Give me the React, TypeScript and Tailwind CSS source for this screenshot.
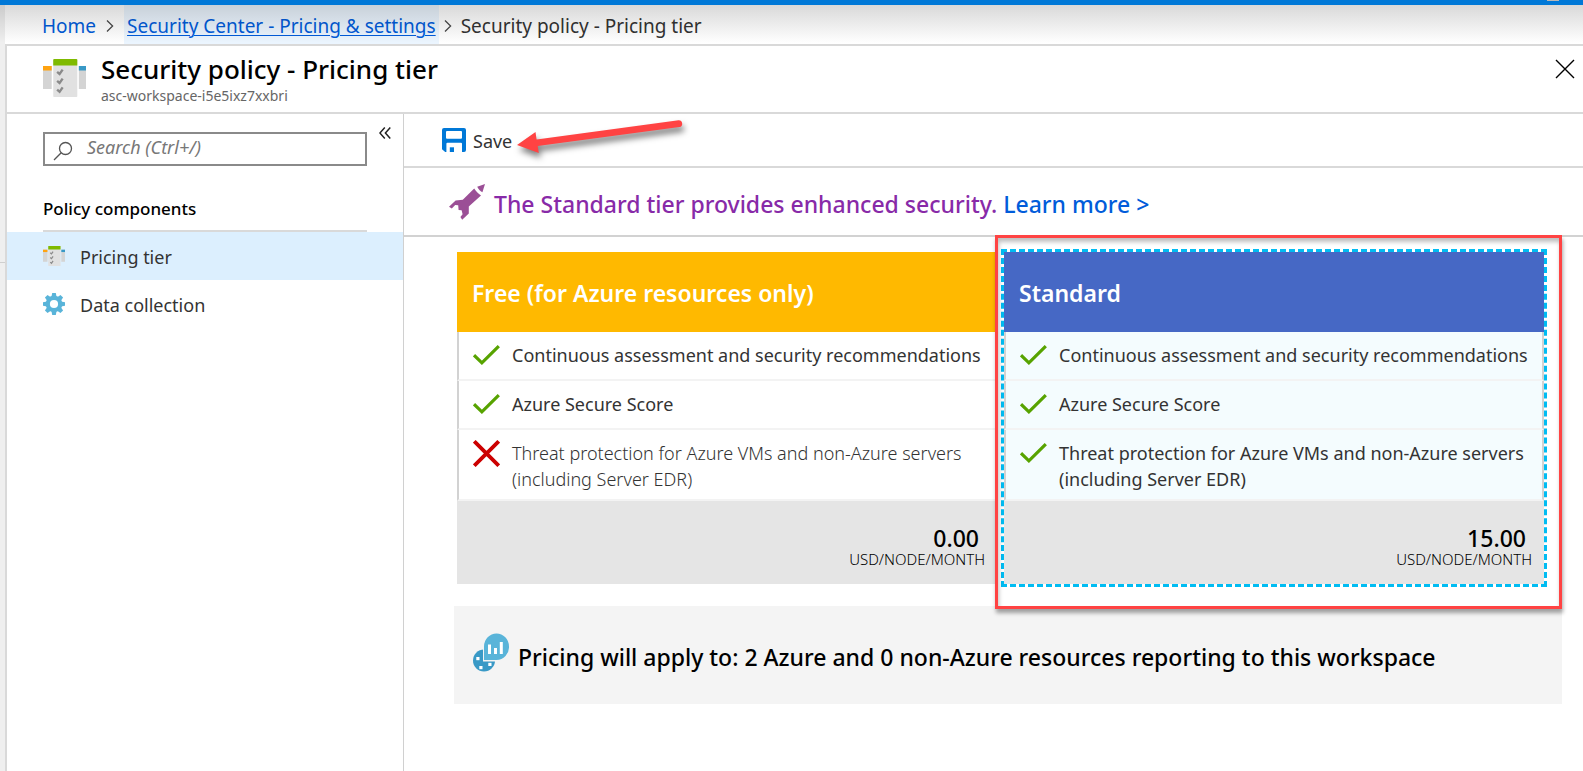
import React from "react";

const features = [
  "Continuous assessment and security recommendations",
  "Azure Secure Score",
  "Threat protection for Azure VMs and non-Azure servers (including Server EDR)",
];

function Chevron() {
  return (
    <svg viewBox="0 0 8 14" className="h-3.5 w-2 shrink-0" fill="none" stroke="#4a4a4a" strokeWidth="1.3" aria-hidden="true">
      <path d="M1 1.5 6.6 7 1 12.5" />
    </svg>
  );
}

function PolicyIcon({ className }: { className: string }) {
  return (
    <svg viewBox="0 0 42 38" preserveAspectRatio="none" className={className} aria-hidden="true">
      <rect x="0" y="7" width="8.5" height="23" fill="#d4d4d4" />
      <rect x="0" y="7" width="8.5" height="4.5" fill="#ffa311" />
      <rect x="35" y="7" width="7" height="23" fill="#d4d4d4" />
      <rect x="35" y="7" width="7" height="4.5" fill="#3999c6" />
      <rect x="10" y="0" width="23.5" height="38" rx="0.8" fill="#e1e1e1" />
      <path d="M11 0h21.5a1 1 0 0 1 1 1v5.5H10V1a1 1 0 0 1 1-1z" fill="#7fba00" />
      <g fill="none" stroke="#8a8a8a" strokeWidth="2.3">
        <path d="m13.8 12.8 2.4 2.2 3-4.4" />
        <path d="m13.8 21.8 2.4 2.2 3-4.4" />
        <path d="m13.8 30.6 2.4 2.2 3-4.4" />
      </g>
    </svg>
  );
}

function GearIcon() {
  return (
    <svg viewBox="0 0 22 22" className="size-[22px] shrink-0" aria-hidden="true">
      <g fill="#59b4d9">
        <circle cx="11" cy="11" r="8.3" />
        {[0, 45, 90, 135, 180, 225, 270, 315].map((angle) => (
          <path key={angle} d="M8.4 4 9.2 0h3.6L13.6 4z" transform={`rotate(${angle} 11 11)`} />
        ))}
      </g>
      <circle cx="11" cy="11" r="4.1" fill="#fff" />
    </svg>
  );
}

function SaveIcon() {
  return (
    <svg viewBox="0 0 24 24" className="size-6 shrink-0" aria-hidden="true">
      <path
        fill="#0078d7"
        fillRule="evenodd"
        d="M2 0h20a2 2 0 0 1 2 2v20a2 2 0 0 1-2 2h-2v-8.2a1 1 0 0 0-1-1H5.400a1 1 0 0 0-1 1V24H3.200L0 21.200V2a2 2 0 0 1 2-2zM5 3a1 1 0 0 0-1 1v5.800a1 1 0 0 0 1 1h14a1 1 0 0 0 1-1V4a1 1 0 0 0-1-1z"
      />
      <path fill="#0078d7" d="M7.800 19.300H12V24H7.800z" />
    </svg>
  );
}

function RocketIcon() {
  return (
    <svg viewBox="0 0 36 36" className="size-9 shrink-0" fill="#9b4f96" aria-hidden="true">
      <path d="M36 0 28.200 2.800C29.500 5.600 31 7 33.400 8.200z" />
      <path d="M25.200 4.600C27.500 7.800 29.200 9.500 32 11.400L19.800 22.600V29.400L13.200 35.800 11.400 33 13.600 30.200 12.600 26.200 9.600 26 9.200 21.200 6.200 21 2.800 24.400 0 22.700 6.600 16.400 13.800 15.800z" />
    </svg>
  );
}

function CheckIcon() {
  return (
    <svg viewBox="0 0 27 20" className="mt-[3px] h-5 w-[27px] shrink-0" fill="none" stroke="#57a300" strokeWidth="3.2" aria-label="Included">
      <path d="M1 10.200 8.900 17.800 25.800 1.200" />
    </svg>
  );
}

function CrossIcon() {
  return (
    <svg viewBox="0 0 27 27" className="size-[27px] shrink-0" fill="none" stroke="#cc0000" strokeWidth="3.8" aria-label="Not included">
      <path d="M1.300 1.300 25.700 25.700M25.700 1.300 1.300 25.700" />
    </svg>
  );
}

function ResourcesIcon() {
  return (
    <svg viewBox="0 0 36 39" className="mb-[6px] h-[39px] w-9 shrink-0" aria-hidden="true">
      <circle cx="11" cy="27.500" r="11" fill="#3999c6" />
      <g fill="#fff">
        <rect x="3.300" y="24" width="3.200" height="3.200" />
        <rect x="6.300" y="33" width="3.200" height="3.200" />
        <rect x="15.300" y="29.800" width="3.200" height="3.200" />
      </g>
      <path d="M10 28.400V14A13 13 0 0 1 36 14 13 13 0 0 1 23 28.400z" fill="#f4f4f4" />
      <path d="M11 27V13.500A12.500 13 0 0 1 36 13.500 12.500 13 0 0 1 23.500 27z" fill="#59b4d9" />
      <path d="M15 11.500h3V21h-3zM21 15h3v6h-3zM26.800 9h3v12h-3z" fill="#fff" />
    </svg>
  );
}

type TierProps = {
  title: string;
  headerClass: string;
  rowClass: string;
  excluded: boolean;
  price: string;
  children?: React.ReactNode;
};

function Tier({ title, headerClass, rowClass, excluded, price, children }: TierProps) {
  return (
    <section className="relative min-w-0 flex-1">
      <h2 className={`flex h-20 items-center px-[15px] pt-0.5 text-[23px] font-semibold text-white ${headerClass}`}>{title}</h2>
      <ul>
        {features.map((text, i) => {
          const off = excluded && i === 2;
          return (
            <li
              key={text}
              className={`flex min-h-[49px] gap-3 border-x-2 border-b-2 border-x-[#d2d2d2] border-b-[#f3f3f3] pt-[10px] pb-[7px] pl-[14px] text-[18px] leading-[26px] ${rowClass}`}
            >
              {off ? <CrossIcon /> : <CheckIcon />}
              <span className={off ? "font-light text-[#333]" : "text-[#333]"}>{text}</span>
            </li>
          );
        })}
      </ul>
      <div className="bg-[#e5e5e5] pt-[25px] pr-3 pb-4 text-right text-black">
        <div className="pr-[6px] text-[23px] leading-6 font-medium">{price}</div>
        <div className="text-[15px] leading-[18px] font-light">USD/NODE/MONTH</div>
      </div>
      {children}
    </section>
  );
}

export default function App() {
  return (
    <div className="flex min-h-screen flex-col bg-white font-['Noto_Sans','Open_Sans',sans-serif] text-[#333]">
      <div className="flex h-[5px] justify-end bg-[#0078d7] pr-6">
        <span className="h-px w-3 bg-[#b8b8b8]" />
      </div>
      <div className="relative flex flex-1">
        <div className="w-[5px] shrink-0 bg-[#efefef] pt-[257px]">
          <div className="h-px bg-[#cfcfcf]" />
        </div>
        <div className="flex min-w-0 flex-1 flex-col">
          <nav aria-label="Breadcrumb" className="flex h-[39px] items-center text-[19px]">
            <a href="#home" className="flex h-full items-center pt-1 pl-[37px] text-[#015cda]">Home</a>
            <span className="px-2.5 pt-0.5"><Chevron /></span>
            <a href="#pricing" className="flex h-full items-center bg-[#ebf5ff] px-[3px] pt-1 text-[#015cda] underline decoration-1 underline-offset-2">
              Security Center - Pricing &amp; settings
            </a>
            <span className="px-[5px] pt-0.5"><Chevron /></span>
            <span className="pt-1 pl-1">Security policy - Pricing tier</span>
          </nav>

          <div className="flex flex-1 flex-col border-t-2 border-l-2 border-[#d9d9d9]">
            <header className="flex h-[68px] shrink-0 items-start border-b-2 border-[#d9d9d9] pt-[7px] pr-2 pl-9">
              <PolicyIcon className="mt-[6px] h-[38px] w-[43px] shrink-0" />
              <div className="flex-1 pl-[15px]">
                <h1 className="text-[26px] leading-8 font-medium text-black">Security policy - Pricing tier</h1>
                <p className="text-[14px] leading-[21px] text-[#666]">asc-workspace-i5e5ixz7xxbri</p>
              </div>
              <button type="button" aria-label="Close" className="mt-[6px]">
                <svg viewBox="0 0 20 20" className="size-5" stroke="#000" strokeWidth="1.4" fill="none" aria-hidden="true">
                  <path d="M1 1 19 19M19 1 1 19" />
                </svg>
              </button>
            </header>

            <div className="flex flex-1">
              <aside className="w-[397px] shrink-0 border-r border-[#d0d0d0]">
                <div className="flex items-start pt-[13px] pl-9">
                  <label className="mt-[5px] flex h-[34px] w-[324px] items-center border-2 border-[#8a8a8a] pl-2">
                    <svg viewBox="0 0 20 20" className="mt-[3px] size-5 shrink-0" fill="none" stroke="#555" strokeWidth="1.3" aria-hidden="true">
                      <circle cx="12.500" cy="7.500" r="6" />
                      <path d="M8.200 11.800 1 19" />
                    </svg>
                    <input
                      type="text"
                      aria-label="Search"
                      placeholder="Search (Ctrl+/)"
                      className="ml-[14px] w-full min-w-0 pb-[3px] text-[18px] italic outline-none placeholder:text-[#777]"
                    />
                  </label>
                  <button type="button" aria-label="Collapse menu" className="ml-3">
                    <svg viewBox="0 0 12 12" className="size-3" fill="none" stroke="#222" strokeWidth="1.5" aria-hidden="true">
                      <path d="M5.800 .6.9 6l4.900 5.400M11.300 .6 6.400 6l4.900 5.400" />
                    </svg>
                  </button>
                </div>
                <h2 className="mr-9 ml-9 border-b-2 border-[#d9d9d9] pt-[31px] pb-[9px] text-[17px] leading-6 font-medium text-black">
                  Policy components
                </h2>
                <nav aria-label="Policy components" className="text-[18px]">
                  <a href="#tier" className="flex h-12 items-center gap-[15px] bg-[#dceffe] pl-9">
                    <PolicyIcon className="h-5 w-[22px] shrink-0" />
                    <span className="pt-0.5">Pricing tier</span>
                  </a>
                  <a href="#data" className="flex h-12 items-center gap-[15px] pl-9">
                    <GearIcon />
                    <span className="pt-0.5">Data collection</span>
                  </a>
                </nav>
              </aside>

              <main className="min-w-0 flex-1">
                <div className="relative flex h-[54px] items-center border-b-2 border-[#d9d9d9] pl-[38px]">
                  <button type="button" className="flex items-center gap-[7px] text-[18px]">
                    <SaveIcon />
                    <span className="pt-0.5">Save</span>
                  </button>
                  <svg viewBox="0 0 180 60" className="pointer-events-none absolute top-0 left-[106px] h-[60px] w-[180px]" aria-hidden="true">
                    <path
                      d="M7 31 25.500 18 26.600 25.500 168.500 6.200a3.500 3.500 0 0 1 1 6.900L27.700 32 28.800 39z"
                      fill="#ff4343"
                      className="drop-shadow-[2px_5px_3px_rgba(0,0,0,0.5)]"
                    />
                  </svg>
                </div>
                <div className="flex h-[69px] items-center border-b-2 border-[#d2d2d2] pl-[45px]">
                  <RocketIcon />
                  <p className="pt-1.5 pl-[9px] text-[23px] font-medium text-[#882aa8]">
                    The Standard tier provides enhanced security.{" "}
                    <a href="#learn" className="text-[#015cda]">Learn more &gt;</a>
                  </p>
                </div>

                <div className="pr-[21px] pl-[50px]">
                  <div className="flex gap-[7px] pt-[15px] pr-[18px] pl-[3px]">
                    <Tier title="Free (for Azure resources only)" headerClass="bg-[#ffb900]" rowClass="bg-white" excluded price="0.00" />
                    <Tier title="Standard" headerClass="bg-[#4668c5]" rowClass="bg-[#f4fcfe]" excluded={false} price="15.00">
                      <div className="pointer-events-none absolute -inset-[3px] border-3 border-dashed border-[#00bcf2]" />
                      <div className="pointer-events-none absolute -top-[17px] -right-[18px] -bottom-[25px] -left-[9px] border-3 border-[#ff4343] shadow-[1px_4px_4px_rgba(0,0,0,0.35),inset_1px_4px_4px_rgba(0,0,0,0.25)]" />
                    </Tier>
                  </div>
                  <div className="mt-[22px] flex h-[98px] items-center gap-[9px] bg-[#f4f4f4] pl-[19px] text-[23px] font-medium text-black">
                    <ResourcesIcon />
                    <p className="pt-1">Pricing will apply to: 2 Azure and 0 non-Azure resources reporting to this workspace</p>
                  </div>
                </div>
              </main>
            </div>
          </div>
        </div>
        <div className="pointer-events-none absolute inset-x-0 top-0 h-[38px] bg-linear-to-b from-black/15 to-transparent" />
      </div>
    </div>
  );
}
